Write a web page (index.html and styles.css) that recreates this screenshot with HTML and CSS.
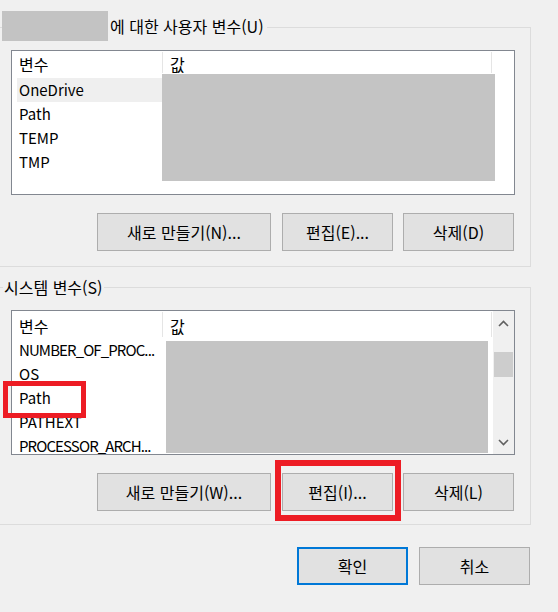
FILE: index.html
```html
<!DOCTYPE html>
<html lang="ko">
<head>
<meta charset="utf-8">
<title>환경 변수</title>
<link rel="stylesheet" href="styles.css">
</head>
<body>
<div class="page">
  <section class="group group-user">
    <div class="legend legend-user">
      <span class="redact-name"></span>
      <span class="legend-text lt-user">에 대한 사용자 변수(U)</span>
    </div>
    <div class="listbox list-user">
      <div class="list-main">
        <div class="list-head head-user">
          <div class="hc hc-name hn-user">변수</div>
          <div class="hc hc-value hv-user">값</div>
        </div>
        <div class="list-body">
          <div class="col-names names-user">
            <div class="row selected">OneDrive</div>
            <div class="row">Path</div>
            <div class="row">TEMP</div>
            <div class="row">TMP</div>
          </div>
          <div class="redact-values rv-user"></div>
        </div>
      </div>
    </div>
    <div class="btn-row">
      <button class="btn btn-wide">새로 만들기(N)...</button>
      <button class="btn btn-mid">편집(E)...</button>
      <button class="btn btn-last">삭제(D)</button>
    </div>
  </section>

  <section class="group group-sys">
    <div class="legend legend-sys">
      <span class="legend-text lt-sys">시스템 변수(S)</span>
    </div>
    <div class="listbox list-sys">
      <div class="list-main main-sys">
        <div class="list-head head-sys">
          <div class="hc hc-name hn-sys">변수</div>
          <div class="hc hc-value hv-sys">값</div>
        </div>
        <div class="list-body">
          <div class="col-names names-sys">
            <div class="row tight">NUMBER_OF_PROC...</div>
            <div class="row">OS</div>
            <div class="row">Path</div>
            <div class="row">PATHEXT</div>
            <div class="row tight">PROCESSOR_ARCH...</div>
          </div>
          <div class="redact-values rv-sys"></div>
        </div>
      </div>
      <div class="scrollbar">
        <div class="sb-btn">
          <svg width="11" height="7" viewBox="0 0 11 7"><polyline points="1,6 5.5,1.5 10,6" fill="none" stroke="#606060" stroke-width="1.6"/></svg>
        </div>
        <div class="sb-track"><div class="sb-thumb"></div></div>
        <div class="sb-btn">
          <svg width="11" height="7" viewBox="0 0 11 7"><polyline points="1,1 5.5,5.5 10,1" fill="none" stroke="#606060" stroke-width="1.6"/></svg>
        </div>
      </div>
    </div>
    <div class="btn-row">
      <button class="btn btn-wide">새로 만들기(W)...</button>
      <button class="btn btn-mid">편집(I)...</button>
      <button class="btn btn-last">삭제(L)</button>
    </div>
  </section>

  <div class="dialog-btns">
    <button class="btn btn-ok">확인</button>
    <button class="btn btn-cancel">취소</button>
  </div>

  <div class="mark mark-path"></div>
  <div class="mark mark-edit"></div>
</div>
</body>
</html>
```

FILE: styles.css
```css
html, body {
  margin: 0;
  padding: 0;
}
body {
  background: #f0f0f0;
  font-family: "Noto Sans CJK KR", "Noto Sans", sans-serif;
  font-size: 15px;
  color: #000;
  width: 558px;
  height: 612px;
  overflow: hidden;
}
.page {
  position: relative;
  padding-top: 27px;
}
.group {
  width: 530px;
  border: 1px solid #dcdcdc;
  border-left: none;
}
.group-user {
  padding-bottom: 15px;
}
.group-sys {
  margin-top: 20px;
  padding-bottom: 13px;
}
.legend {
  display: flex;
  align-items: center;
}
.legend-user {
  height: 30px;
  margin-top: -17px;
}
.legend-sys {
  height: 20px;
  margin-top: -11px;
  padding-left: 3px;
}
.redact-name {
  width: 106px;
  height: 30px;
  margin-left: 2px;
  background: #c3c3c3;
}
.legend-text {
  background: #f0f0f0;
  font-size: 16px;
  line-height: 20px;
  white-space: nowrap;
}
.lt-user {
  padding: 0 3px 0 2px;
}
.lt-sys {
  padding: 0 2px 0 1px;
}
.listbox {
  box-sizing: border-box;
  width: 504px;
  height: 145px;
  margin-left: 11px;
  border: 1px solid #828790;
  background: #fff;
  display: flex;
  overflow: hidden;
}
.list-user {
  margin-top: 9px;
}
.list-sys {
  margin-top: 13px;
}
.list-main {
  flex: 1;
  display: flex;
  flex-direction: column;
  min-width: 0;
}
.list-head {
  display: flex;
  flex: none;
}
.head-user {
  height: 23px;
}
.head-sys {
  height: 27px;
}
.hc {
  box-sizing: border-box;
  padding-left: 7px;
  border-right: 1px solid #e5e5e5;
  font-size: 16px;
  line-height: 20px;
  white-space: nowrap;
}
.hn-user, .hv-user {
  margin-top: 1px;
  height: 21px;
  padding-top: 2px;
}
.hn-sys, .hv-sys {
  margin-top: 1px;
  height: 25px;
  padding-top: 4px;
}
.hc-name {
  width: 151px;
}
.hv-user {
  width: 329px;
}
.hv-sys {
  width: 329px;
}
.list-body {
  display: flex;
  flex: 1;
  min-height: 0;
}
.col-names {
  box-sizing: border-box;
  padding-left: 5px;
  flex: none;
}
.names-user {
  width: 150px;
  padding-top: 4px;
}
.names-sys {
  width: 154px;
  padding-top: 0;
}
.row {
  box-sizing: border-box;
  width: 145px;
  height: 24px;
  line-height: 24px;
  padding-left: 2px;
  white-space: nowrap;
}
.row.tight {
  letter-spacing: -0.9px;
}
.row.selected {
  background: #efefef;
}
.redact-values {
  background: #c4c4c4;
  flex: none;
}
.rv-user {
  width: 333px;
  height: 107px;
}
.rv-sys {
  width: 322px;
  margin-top: 3px;
  height: 112px;
}
.scrollbar {
  flex: none;
  width: 21px;
  background: #f0f0f0;
  display: flex;
  flex-direction: column;
}
.sb-btn {
  height: 24px;
  display: flex;
  align-items: center;
  justify-content: center;
}
.sb-track {
  flex: 1;
  display: flex;
  flex-direction: column;
  align-items: center;
}
.sb-thumb {
  width: 19px;
  height: 25px;
  margin-top: 17px;
  background: #cdcdcd;
}
.btn-row {
  display: flex;
  margin-top: 18px;
  padding-left: 97px;
}
.btn {
  box-sizing: border-box;
  height: 38px;
  border: 1px solid #adadad;
  background: #e1e1e1;
  font-family: "Noto Sans CJK KR", "Noto Sans", sans-serif;
  font-size: 16px;
  color: #000;
  padding: 0;
  white-space: nowrap;
}
.btn-wide {
  width: 174px;
}
.btn-mid {
  width: 111px;
  margin-left: 11px;
}
.btn-last {
  width: 111px;
  margin-left: 10px;
}
.dialog-btns {
  display: flex;
  margin-top: 22px;
  padding-left: 297px;
}
.btn-ok {
  width: 111px;
  border: 2px solid #0078d7;
}
.btn-cancel {
  width: 111px;
  margin-left: 11px;
}
.mark {
  position: absolute;
  box-sizing: border-box;
  border-style: solid;
  border-color: #ed1c24;
}
.mark-path {
  left: 3px;
  top: 381px;
  width: 83px;
  height: 37px;
  border-width: 5px;
}
.mark-edit {
  left: 275px;
  top: 460px;
  width: 126px;
  height: 61px;
  border-width: 6px;
}
```
